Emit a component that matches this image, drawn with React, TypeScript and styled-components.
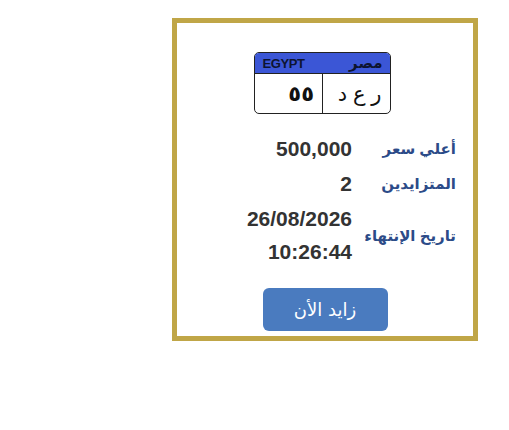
import * as React from 'react'
import styled, { createGlobalStyle } from 'styled-components'

const GlobalStyle = createGlobalStyle`
  body {
    margin: 0;
    background: #ffffff;
    font-family: "Liberation Sans", "DejaVu Sans", Arial, sans-serif;
  }
`

const Page = styled.div`
  display: flex;
  justify-content: flex-end;
  padding: 18px 31px 0 0;
`

const Card = styled.div`
  width: 296px;
  border: 5px solid #c0a647;
  background: #fff;
  display: flex;
  flex-direction: column;
  align-items: center;
  padding: 29px 0 5px;
`

const Plate = styled.div`
  width: 135px;
  border: 1px solid #222;
  border-radius: 5px;
  overflow: hidden;
  margin-left: -6px;
  direction: rtl;
`

const PlateHead = styled.div`
  height: 20px;
  background: #3b56d6;
  display: flex;
  justify-content: space-between;
  align-items: center;
  padding: 0 7px 0 8px;
  border-bottom: 1px solid #222;
  color: #0d1430;
  font-weight: bold;
`

const HeadAr = styled.span`
  font-size: 15px;
`

const HeadEn = styled.span`
  font-size: 13px;
  letter-spacing: -0.4px;
`

const PlateBody = styled.div`
  height: 39px;
  display: grid;
  grid-template-columns: 1fr 1fr;
`

const PlateCell = styled.div<{ $bold?: boolean; $divider?: boolean }>`
  display: flex;
  align-items: center;
  padding: 0 8px;
  font-size: ${p => (p.$bold ? '21px' : '21px')};
  font-weight: ${p => (p.$bold ? 'bold' : 'normal')};
  color: #111;
  border-left: ${p => (p.$divider ? '1px solid #222' : 'none')};
  letter-spacing: 1px;
`

const Info = styled.div`
  direction: rtl;
  align-self: stretch;
  display: grid;
  grid-template-columns: 96px auto;
  justify-content: start;
  column-gap: 8px;
  row-gap: 2px;
  padding-right: 17px;
  margin-top: 18px;
`

const Label = styled.div`
  display: flex;
  align-items: center;
  white-space: nowrap;
  color: #2c4b88;
  font-weight: bold;
  font-size: 15px;
  line-height: 33px;
`

const Value = styled.div`
  text-align: right;
  color: #333;
  font-weight: bold;
  font-size: 21px;
  line-height: 33px;
`

const Ltr = styled.div`
  direction: ltr;
`

const BidButton = styled.button`
  margin-top: 20px;
  width: 125px;
  height: 43px;
  border: none;
  border-radius: 6px;
  background: #4a7bbf;
  color: #fff;
  font-family: "DejaVu Sans", "Liberation Sans", sans-serif;
  font-size: 18px;
  direction: rtl;
  cursor: pointer;
`

export default function App() {
  return (
    <>
      <GlobalStyle />
      <Page>
        <Card>
          <Plate>
            <PlateHead>
              <HeadAr>مصر</HeadAr>
              <HeadEn>EGYPT</HeadEn>
            </PlateHead>
            <PlateBody>
              <PlateCell $divider>ر ع د</PlateCell>
              <PlateCell $bold>٥٥</PlateCell>
            </PlateBody>
          </Plate>
          <Info>
            <Label>أعلي سعر</Label>
            <Value><Ltr>500,000</Ltr></Value>
            <Label>المتزايدين</Label>
            <Value><Ltr>2</Ltr></Value>
            <Label>تاريخ الإنتهاء</Label>
            <Value>
              <Ltr>26/08/2026</Ltr>
              <Ltr>10:26:44</Ltr>
            </Value>
          </Info>
          <BidButton>زايد الأن</BidButton>
        </Card>
      </Page>
    </>
  )
}
